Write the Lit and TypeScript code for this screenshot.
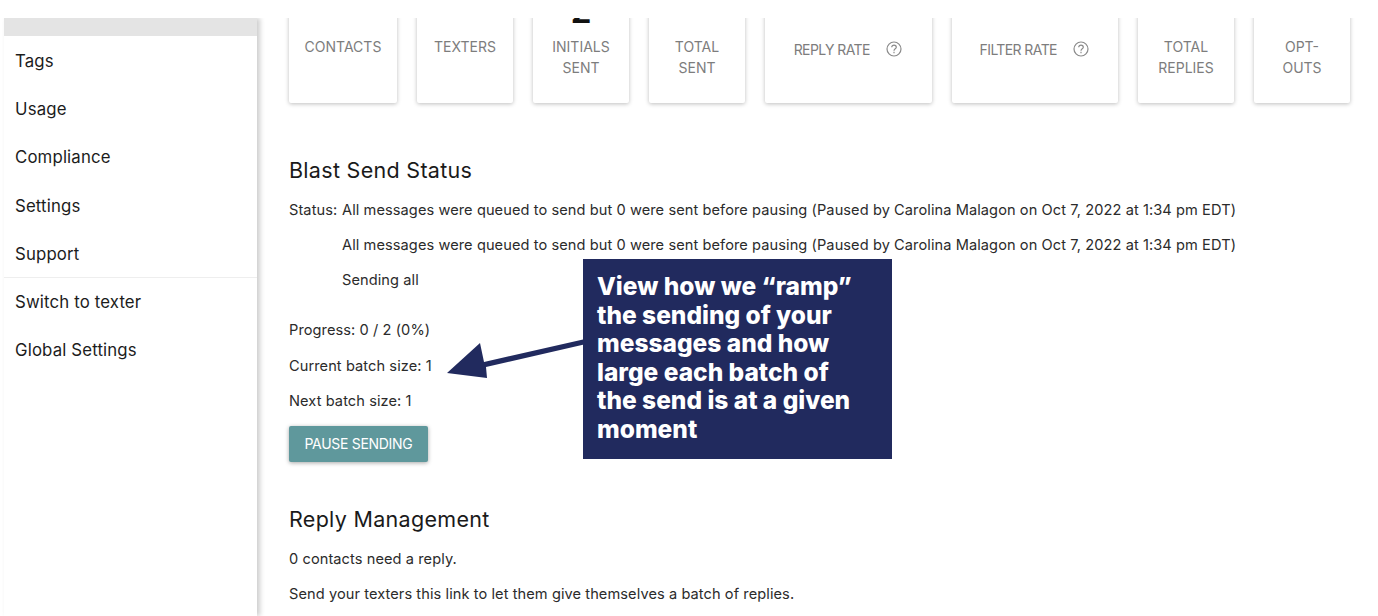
import { LitElement, html, css } from "lit";
import { customElement } from "lit/decorators.js";

const message =
  "All messages were queued to send but 0 were sent before pausing (Paused by Carolina Malagon on Oct 7, 2022 at 1:34 pm EDT)";

const helpIcon = html`<svg class="help" width="18" height="18" viewBox="0 0 18 18" fill="none" stroke="#8a8a8a" stroke-width="1.2">
  <circle cx="9" cy="9" r="7" />
  <path d="M6.7 7.3c0-1.3 1-2.2 2.3-2.2s2.3.9 2.3 2.1c0 1.7-2.3 1.6-2.3 3.6" />
  <path d="M9 11.8v1.4" />
</svg>`;

@customElement("app-root")
export class AppRoot extends LitElement {
  static override styles = css`
    :host {
      display: block;
      position: relative;
      width: 1378px;
      height: 616px;
      padding-top: 18px;
      box-sizing: border-box;
      overflow: hidden;
      background: #fff;
      font-family: Inter, "Liberation Sans", sans-serif;
      color: #2b2b2b;
    }

    .frame {
      display: flex;
      height: 598px;
      overflow: hidden;
    }

    .sidebar {
      width: 253px;
      margin-left: 4px;
      flex: none;
      box-shadow: 3px 0 5px rgba(0, 0, 0, 0.2);
      font-size: 16.8px;
      letter-spacing: 0.15px;
      color: #1c1c1c;
    }
    .selected {
      height: 18.3px;
      background: #e4e4e4;
    }
    .nav-item {
      height: 48.25px;
      box-sizing: border-box;
      padding: 1px 0 0 11px;
      display: flex;
      align-items: center;
    }
    .divider {
      border-top: 1px solid #eee;
      margin-top: -1px;
    }

    .main {
      flex: 1;
      padding-left: 32px;
      min-width: 0;
    }

    .cards {
      display: flex;
      gap: 20px;
      margin-top: -40px;
    }
    .card {
      height: 125px;
      box-sizing: border-box;
      width: 96px;
      flex: none;
      border-radius: 2px;
      box-shadow: 0 1px 4px rgba(0, 0, 0, 0.26);
      text-align: center;
      font-size: 14px;
      line-height: 21.4px;
      color: #7d7d7d;
    }
    .card.wide-first {
      width: 108px;
    }
    .card.rate {
      width: 166.5px;
    }
    .count {
      height: 58px;
      font-size: 34px;
      line-height: 65px;
      font-weight: 600;
      color: #111;
      overflow: hidden;
    }
    .rate-label {
      display: flex;
      justify-content: center;
      align-items: center;
      gap: 15px;
      padding-top: 3px;
      letter-spacing: -0.6px;
    }
    .help {
      display: block;
      margin-top: -2px;
    }

    h2 {
      margin: 0;
      font-size: 21.5px;
      font-weight: 400;
      letter-spacing: 0.3px;
      line-height: 28px;
      color: #1a1a1a;
    }
    .blast {
      margin-top: 53px;
    }
    .reply {
      margin-top: 43px;
    }
    p {
      margin: 0;
      font-size: 14.6px;
      letter-spacing: 0.08px;
      line-height: 21px;
    }
    .status {
      display: grid;
      grid-template-columns: 53px 1fr;
      row-gap: 14px;
      margin-top: 16px;
    }
    .stats {
      display: flex;
      flex-direction: column;
      gap: 14.5px;
      margin-top: 29px;
    }
    button {
      display: block;
      width: 139px;
      height: 36px;
      margin-top: 14px;
      padding: 0 0 2px;
      border: 0;
      border-radius: 2px;
      background: #5f989c;
      color: #fff;
      font: inherit;
      font-size: 14px;
      letter-spacing: -0.3px;
      box-shadow: 0 1px 4px rgba(0, 0, 0, 0.35);
    }
    .reply-text {
      display: flex;
      flex-direction: column;
      gap: 14.4px;
      margin-top: 15.5px;
    }

    .callout {
      position: absolute;
      left: 583px;
      top: 259px;
      width: 309px;
      height: 200px;
      box-sizing: border-box;
      padding: 13px 28px 13px 14px;
      background: #212a5e;
      color: #fff;
      font-size: 24.5px;
      font-weight: 800;
      line-height: 28.5px;
    }
    .arrow {
      position: absolute;
      left: 440px;
      top: 335px;
    }
  `;

  override render() {
    const nav = ["Tags", "Usage", "Compliance", "Settings", "Support"];
    return html`
      <div class="frame">
        <aside class="sidebar">
          <div class="selected"></div>
          ${nav.map((n) => html`<div class="nav-item">${n}</div>`)}
          <div class="divider"></div>
          <div class="nav-item">Switch to texter</div>
          <div class="nav-item">Global Settings</div>
        </aside>
        <main class="main">
          <div class="cards">
            <div class="card wide-first"><div class="count"></div>CONTACTS</div>
            <div class="card"><div class="count"></div>TEXTERS</div>
            <div class="card"><div class="count">2</div>INITIALS<br />SENT</div>
            <div class="card"><div class="count"></div>TOTAL<br />SENT</div>
            <div class="card rate">
              <div class="count"></div>
              <div class="rate-label">REPLY RATE ${helpIcon}</div>
            </div>
            <div class="card rate">
              <div class="count"></div>
              <div class="rate-label">FILTER RATE ${helpIcon}</div>
            </div>
            <div class="card"><div class="count"></div>TOTAL<br />REPLIES</div>
            <div class="card"><div class="count"></div>OPT-<br />OUTS</div>
          </div>

          <h2 class="blast">Blast Send Status</h2>
          <div class="status">
            <p>Status:</p>
            <p>${message}</p>
            <span></span>
            <p>${message}</p>
            <span></span>
            <p>Sending all</p>
          </div>
          <div class="stats">
            <p>Progress: 0 / 2 (0%)</p>
            <p>Current batch size: 1</p>
            <p>Next batch size: 1</p>
          </div>
          <button>PAUSE SENDING</button>

          <h2 class="reply">Reply Management</h2>
          <div class="reply-text">
            <p>0 contacts need a reply.</p>
            <p>Send your texters this link to let them give themselves a batch of replies.</p>
          </div>
        </main>
      </div>

      <svg class="arrow" width="145" height="50" viewBox="0 0 145 50" fill="#212a5e">
        <path d="M143 4.5 L44 27 L40 8 L7 38 L47 43 L46 32 L144 9.5 Z" />
      </svg>
      <div class="callout">
        View how we “ramp” the sending of your messages and how large each batch of the send is at a given moment
      </div>
    `;
  }
}
